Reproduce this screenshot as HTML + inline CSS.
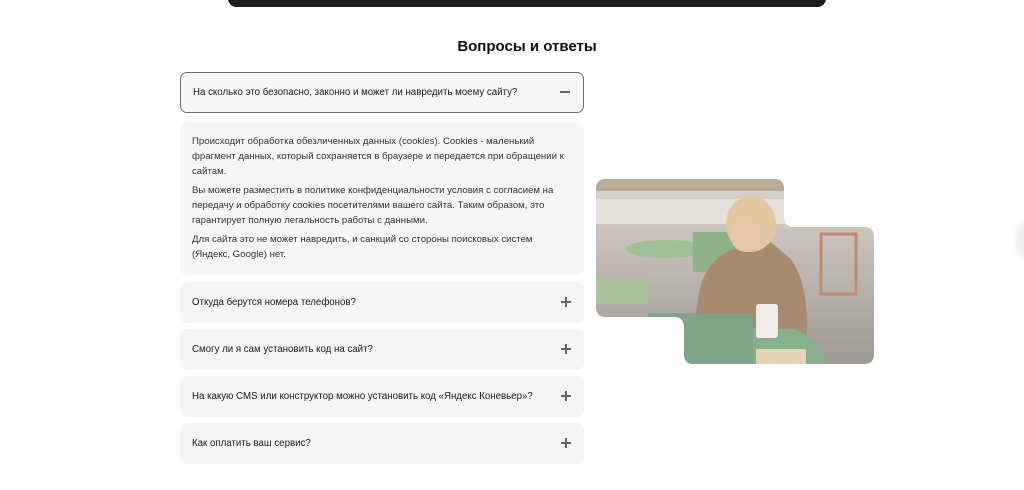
<!DOCTYPE html>
<html><head><meta charset="utf-8"><style>
*{margin:0;padding:0;box-sizing:border-box}
body{width:1024px;height:490px;background:#fff;position:relative;overflow:hidden;font-family:"Liberation Sans",sans-serif;color:#1a1a1a}
.bar{position:absolute;left:228px;top:-10px;width:598px;height:17px;background:#1e1e1e;border-radius:10px}
h2{position:absolute;left:0;width:1054px;text-align:center;top:38px;font-size:15px;font-weight:bold;color:#111}
.q{position:absolute;left:180px;width:404px;height:41px;background:#f5f5f5;border-radius:7px;font-size:9.7px;padding-left:12px;line-height:41px}
.q.open{border:1px solid #6e6e6e;padding-left:12px;line-height:39px;background:#f6f6f6}
.ic{position:absolute;right:13px;top:15px;width:10px;height:10px}
.ic:before{content:"";position:absolute;left:0;top:4px;width:10px;height:1.5px;background:#666}
.plus:after{content:"";position:absolute;left:4.3px;top:0;width:1.5px;height:10px;background:#666}
.ans{position:absolute;left:180px;top:122px;width:404px;height:153px;background:#f6f6f6;border-radius:7px;padding:12px 12px;font-size:9.6px;line-height:15px;color:#333}
.ans p{margin-bottom:4px}
.edge{position:absolute;left:1016px;top:222px;width:20px;height:36px;border-radius:50%;background:#eee;filter:blur(3px)}
</style></head><body>
<div class="bar"></div>
<h2>Вопросы и ответы</h2>
<div class="q open" style="top:72px">На сколько это безопасно, законно и может ли навредить моему сайту?<span class="ic" style="top:14px"></span></div>
<div class="ans">
<p>Происходит обработка обезличенных данных (cookies). Cookies - маленький фрагмент данных, который сохраняется в браузере и передается при обращении к сайтам.</p>
<p>Вы можете разместить в политике конфиденциальности условия с согласием на передачу и обработку cookies посетителями вашего сайта. Таким образом, это гарантирует полную легальность работы с данными.</p>
<p>Для сайта это не может навредить, и санкций со стороны поисковых систем (Яндекс, Google) нет.</p>
</div>
<div class="q" style="top:282px">Откуда берутся номера телефонов?<span class="ic plus"></span></div>
<div class="q" style="top:329px">Смогу ли я сам установить код на сайт?<span class="ic plus"></span></div>
<div class="q" style="top:376px">На какую CMS или конструктор можно установить код «Яндекс Коневьер»?<span class="ic plus"></span></div>
<div class="q" style="top:423px">Как оплатить ваш сервис?<span class="ic plus"></span></div>
<div class="edge"></div>
<svg style="position:absolute;left:596px;top:179px" width="278" height="185" viewBox="0 0 278 185">
<defs>
<clipPath id="c"><path d="M10 0H178Q188 0 188 10V38Q188 48 198 48H268Q278 48 278 58V175Q278 185 268 185H98Q88 185 88 175V148Q88 138 78 138H10Q0 138 0 128V10Q0 0 10 0Z"/></clipPath>
<linearGradient id="bg" x1="0" y1="0" x2="0" y2="1"><stop offset="0" stop-color="#d9d4cc"/><stop offset=".3" stop-color="#c9c3bb"/><stop offset="1" stop-color="#9e9994"/></linearGradient>
</defs>
<g clip-path="url(#c)">
<rect width="278" height="185" fill="url(#bg)"/>
<rect y="0" width="278" height="12" fill="#b8ab98"/>
<rect x="0" y="20" width="200" height="25" fill="#e4e0da"/>
<ellipse cx="70" cy="70" rx="40" ry="9" fill="#9fbf97"/>
<rect x="97" y="53" width="48" height="40" fill="#8fb28a"/>
<rect x="0" y="100" width="52" height="25" fill="#a9c49d"/>
<rect x="225" y="55" width="35" height="60" fill="none" stroke="#c08a6e" stroke-width="3"/>
<path d="M100 145Q100 80 140 70L165 55L195 80Q215 110 210 165L120 165Z" fill="#a88b6e"/>
<ellipse cx="155" cy="45" rx="25" ry="28" fill="#e2c7a0"/>
<ellipse cx="150" cy="55" rx="16" ry="18" fill="#e9c6a8"/>
<path d="M70 185Q70 150 130 148L200 150Q225 165 230 185Z" fill="#88b08a"/>
<rect x="52" y="134" width="105" height="51" fill="#7fa48a"/>
<rect x="160" y="125" width="22" height="34" rx="3" fill="#f1ede6"/>
<rect x="160" y="170" width="50" height="15" fill="#e6d3b8"/>
</g>
</svg>
</body></html>
